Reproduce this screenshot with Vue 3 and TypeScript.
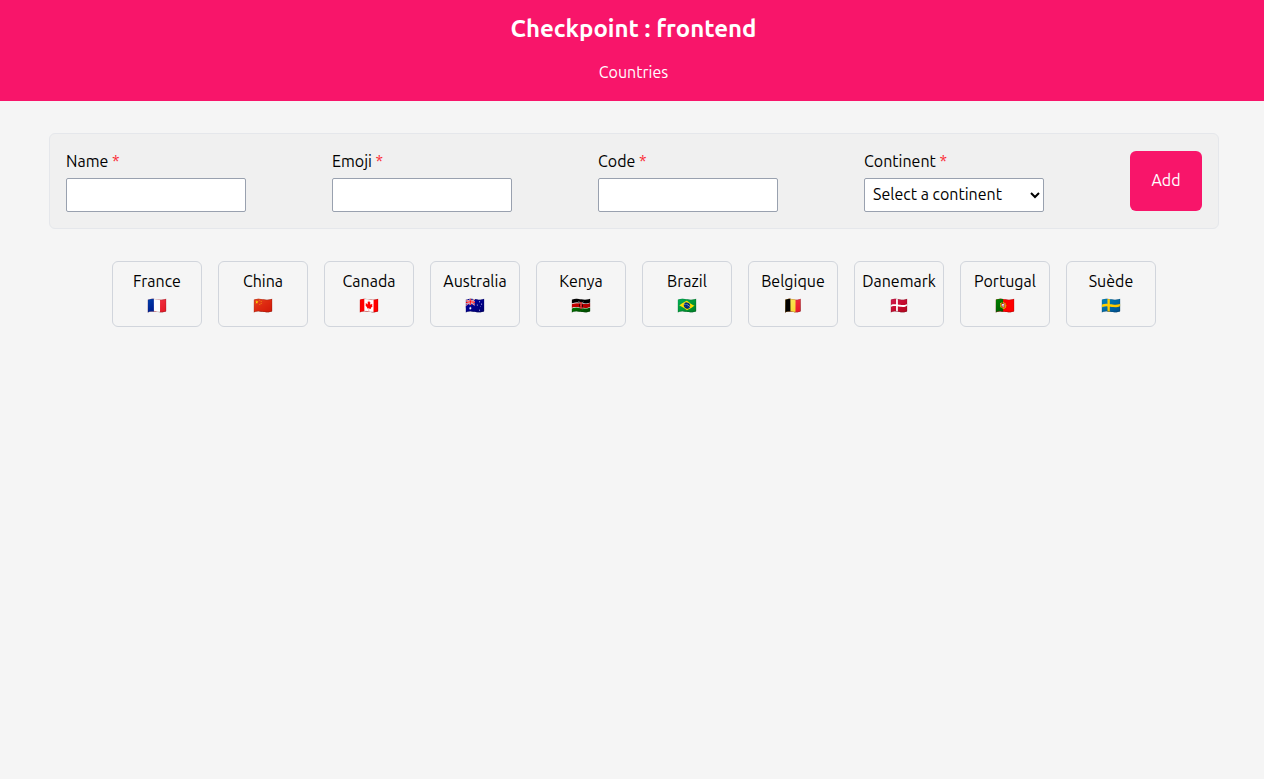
<script setup lang="ts">
import { ref } from 'vue'

interface Country {
  name: string
  code: string
  emoji: string
}

const fields = [
  { id: 'name', label: 'Name' },
  { id: 'emoji', label: 'Emoji' },
  { id: 'code', label: 'Code' },
]

const continents = ['Africa', 'Asia', 'Europe', 'North America', 'Oceania', 'South America']

const form = ref<Record<string, string>>({ name: '', emoji: '', code: '' })
const continent = ref('')

const countries: Country[] = [
  { name: 'France', code: 'fr', emoji: '🇫🇷' },
  { name: 'China', code: 'cn', emoji: '🇨🇳' },
  { name: 'Canada', code: 'ca', emoji: '🇨🇦' },
  { name: 'Australia', code: 'au', emoji: '🇦🇺' },
  { name: 'Kenya', code: 'ke', emoji: '🇰🇪' },
  { name: 'Brazil', code: 'br', emoji: '🇧🇷' },
  { name: 'Belgique', code: 'be', emoji: '🇧🇪' },
  { name: 'Danemark', code: 'dk', emoji: '🇩🇰' },
  { name: 'Portugal', code: 'pt', emoji: '🇵🇹' },
  { name: 'Suède', code: 'se', emoji: '🇸🇪' },
]
</script>

<template>
  <div class="page">
    <header class="header">
      <h1>Checkpoint : frontend</h1>
      <nav><a href="#">Countries</a></nav>
    </header>

    <main>
      <form class="form" @submit.prevent>
        <div v-for="field in fields" :key="field.id" class="field">
          <label :for="field.id">{{ field.label }} <span class="required">*</span></label>
          <input :id="field.id" v-model="form[field.id]" type="text" required />
        </div>
        <div class="field">
          <label for="continent">Continent <span class="required">*</span></label>
          <select id="continent" v-model="continent" required>
            <option value="">Select a continent</option>
            <option v-for="item in continents" :key="item" :value="item">{{ item }}</option>
          </select>
        </div>
        <button type="submit">Add</button>
      </form>

      <div class="countries">
        <a v-for="country in countries" :key="country.code" class="card" href="#">
          <span>{{ country.name }}</span>
          <span>{{ country.emoji }}</span>
        </a>
      </div>
    </main>
  </div>
</template>

<style>
body {
  margin: 0;
  background: #f5f5f5;
}
</style>

<style scoped>
.page,
.page * {
  box-sizing: border-box;
}

.page {
  min-height: 100vh;
  color: #000;
  font-family: Ubuntu, 'Noto Sans', sans-serif;
  font-size: 16px;
  line-height: 22px;
}

.header {
  display: flex;
  flex-direction: column;
  align-items: center;
  gap: 16px;
  padding: 13px 0 18px 3px;
  background: #f8156a;
  color: #fff;
}

h1 {
  margin: 0;
  font-size: 24px;
  font-weight: 700;
  line-height: 32px;
}

a {
  color: inherit;
  text-decoration: none;
}

main {
  display: flex;
  flex-direction: column;
  gap: 32px;
  padding: 32px 45px 32px 49px;
}

.form {
  display: flex;
  justify-content: space-between;
  align-items: center;
  padding: 16px;
  border: 1px solid #e5e7eb;
  border-radius: 6px;
  background: #f0f0f0;
}

.field {
  display: flex;
  flex-direction: column;
  gap: 6px;
  width: 180px;
}

.required {
  color: #fb2c36;
}

input,
select {
  width: 100%;
  height: 34px;
  margin: 0;
  padding: 4px 8px;
  border: 1px solid #99a1af;
  border-radius: 2px;
  background: #fff;
  color: #000;
  font: inherit;
}

select {
  padding: 4px 0 6px 4px;
}

button {
  width: 72px;
  height: 60px;
  padding: 0 0 2px;
  border: 0;
  border-radius: 6px;
  background: #f8156a;
  color: #fff;
  font: inherit;
}

.countries {
  display: flex;
  flex-wrap: wrap;
  justify-content: center;
  gap: 16px;
}

.card {
  display: flex;
  flex-direction: column;
  align-items: center;
  gap: 2px;
  width: 90px;
  padding: 8px 0 10px;
  border: 1px solid #d1d5dc;
  border-radius: 6px;
}
</style>
